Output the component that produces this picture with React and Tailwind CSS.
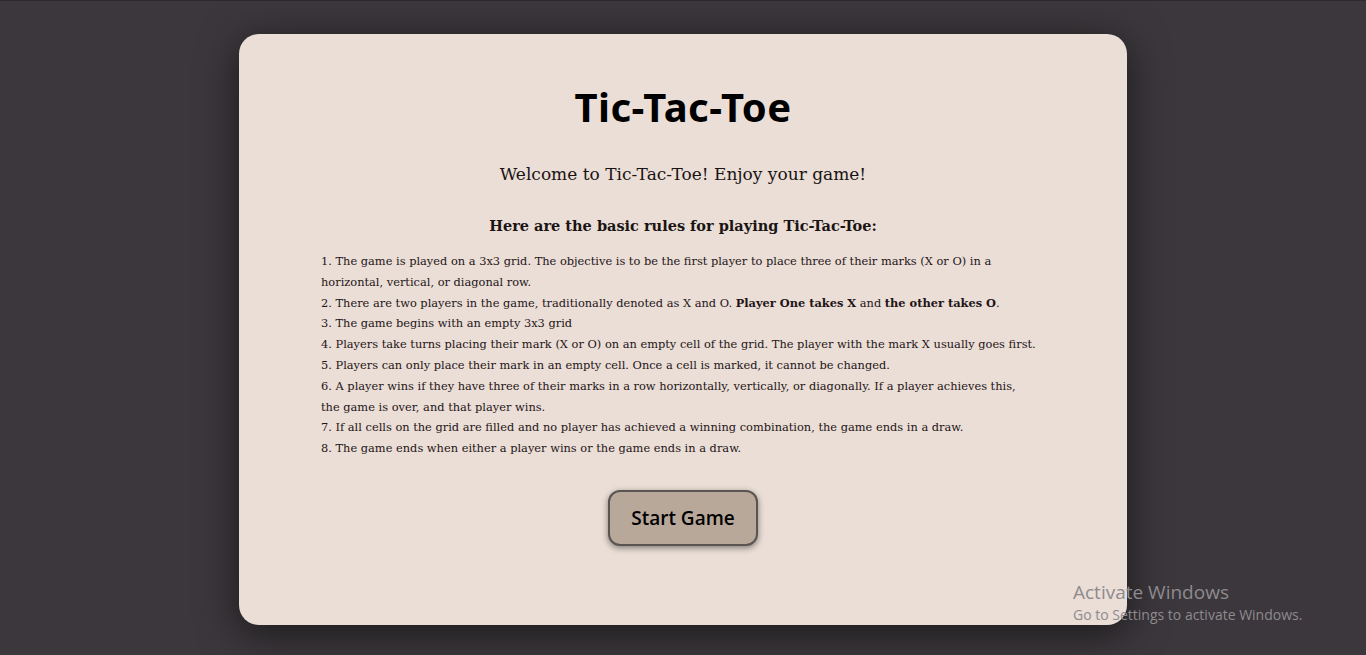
export default function App() {
  return (
    <div className="relative min-h-[655px] w-full overflow-hidden bg-[#3b373c] border-t border-[#2a292d] flex justify-center">
      <div className="mt-[33px] w-[888px] h-[591px] rounded-[20px] bg-[#eaded6] shadow-[0_8px_40px_rgba(0,0,0,0.55)] flex flex-col items-center pt-[49px] font-['DejaVu_Serif','Liberation_Serif',serif]">
        <h1 className="text-[40px] leading-[48px] font-bold text-black tracking-[0.5px] font-['Noto_Sans','Open_Sans',sans-serif]">Tic-Tac-Toe</h1>
        <p className="mt-[31px] text-[17px] leading-[24px] text-[#1a1414]">Welcome to Tic-Tac-Toe! Enjoy your game!</p>
        <h2 className="mt-[30px] text-[14.5px] leading-[20px] font-bold text-[#1a1414]">Here are the basic rules for playing Tic-Tac-Toe:</h2>
        <div className="mt-[15px] w-[724px] text-[11.4px] leading-[20.8px] text-[#1f1517]">
          <p>1. The game is played on a 3x3 grid. The objective is to be the first player to place three of their marks (X or O) in a horizontal, vertical, or diagonal row.</p>
          <p>2. There are two players in the game, traditionally denoted as X and O. <b>Player One takes X</b> and <b>the other takes O</b>.</p>
          <p>3. The game begins with an empty 3x3 grid</p>
          <p>4. Players take turns placing their mark (X or O) on an empty cell of the grid. The player with the mark X usually goes first.</p>
          <p>5. Players can only place their mark in an empty cell. Once a cell is marked, it cannot be changed.</p>
          <p>6. A player wins if they have three of their marks in a row horizontally, vertically, or diagonally. If a player achieves this,<br />the game is over, and that player wins.</p>
          <p>7. If all cells on the grid are filled and no player has achieved a winning combination, the game ends in a draw.</p>
          <p>8. The game ends when either a player wins or the game ends in a draw.</p>
        </div>
        <button className="mt-[31px] w-[150px] h-[56px] rounded-[12px] bg-[#b8a89a] border-2 border-[#5a5452] shadow-[0_2px_6px_rgba(0,0,0,0.45)] text-[19px] font-semibold text-black font-['Open_Sans','Noto_Sans',sans-serif]">Start Game</button>
      </div>
      <div className="absolute left-[1073px] top-[578px] text-[#8e8a8e] pointer-events-none font-['Open_Sans','Noto_Sans',sans-serif]">
        <div className="text-[19px] leading-[26px]">Activate Windows</div>
        <div className="text-[14px] leading-[20px]">Go to Settings to activate Windows.</div>
      </div>
    </div>
  );
}
